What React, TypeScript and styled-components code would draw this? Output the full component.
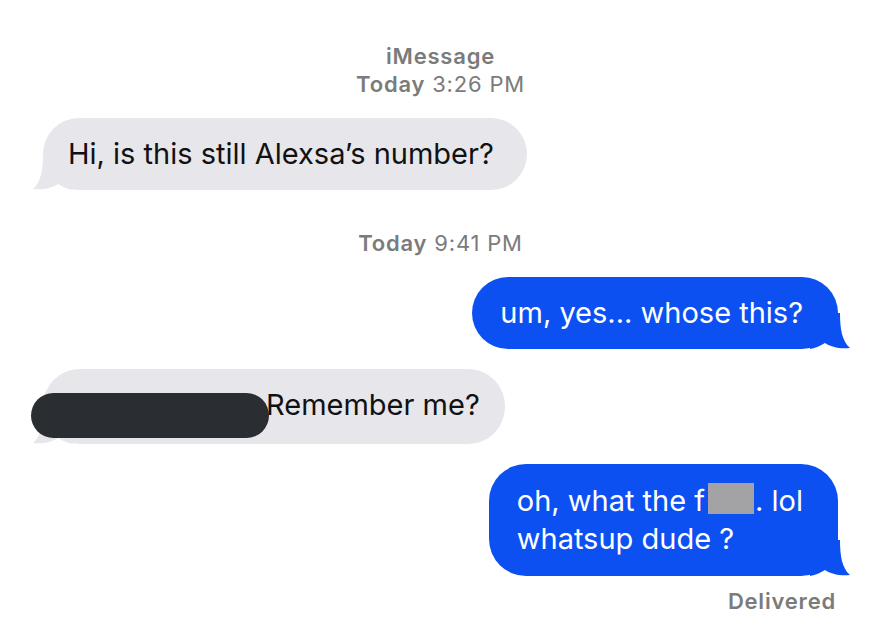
import React from "react";
import styled, { createGlobalStyle } from "styled-components";

const GlobalStyle = createGlobalStyle`
  html, body {
    margin: 0;
    padding: 0;
    background: #ffffff;
  }
  body {
    font-family: Inter, "Liberation Sans", Arial, sans-serif;
    -webkit-font-smoothing: antialiased;
  }
`;

const Thread = styled.div`
  width: 869px;
  height: 628px;
  box-sizing: border-box;
  padding: 42px 31px 0 43px;
  display: flex;
  flex-direction: column;
  overflow: hidden;
`;

const Stamp = styled.div<{ $top: number }>`
  margin-top: ${(p) => p.$top}px;
  text-align: center;
  color: #7b7b7b;
  font-size: 22px;
  letter-spacing: 0.8px;
  line-height: 28px;
  b {
    font-weight: 600;
  }
`;

const Row = styled.div<{ $mine?: boolean; $top: number }>`
  display: flex;
  justify-content: ${(p) => (p.$mine ? "flex-end" : "flex-start")};
  margin-top: ${(p) => p.$top}px;
`;

const Bubble = styled.div<{ $mine?: boolean; $padRight?: number }>`
  position: relative;
  isolation: isolate;
  box-sizing: border-box;
  min-height: 72px;
  padding: 21px ${(p) => p.$padRight ?? (p.$mine ? 35 : 33)}px 21px
    ${(p) => (p.$mine ? 28 : 25)}px;
  border-radius: 37px;
  font-size: 29px;
  line-height: 30px;
  color: ${(p) => (p.$mine ? "#ffffff" : "#111111")};
  background: ${(p) => (p.$mine ? "#0d50f2" : "#e6e6eb")};
`;

const Tail = styled.svg<{ $mine?: boolean }>`
  position: absolute;
  z-index: -1;
  bottom: 0;
  width: 40px;
  height: 36px;
  ${(p) =>
    p.$mine
      ? "right: -12px; transform: scaleX(-1);"
      : "left: -10px;"}
`;

const Lines = styled.div`
  line-height: 38px;
  margin: -3px 0;
`;

const NameRedaction = styled.span`
  display: inline-block;
  width: 238px;
  height: 45px;
  margin: -4px -3px -15px -37px;
  border-radius: 23px;
  background: #2a2e33;
  vertical-align: -8px;
`;

const WordRedaction = styled.span`
  display: inline-block;
  width: 46px;
  height: 31px;
  margin: 0 1px 0 3px;
  background: #a3a3a5;
  vertical-align: -3px;
`;

const Status = styled.div`
  align-self: flex-end;
  margin-top: 11px;
  margin-right: 2px;
  color: #7b7b7b;
  font-size: 22px;
  letter-spacing: 0.8px;
  line-height: 28px;
  font-weight: 600;
`;

function BubbleTail({ mine }: { mine?: boolean }) {
  return (
    <Tail $mine={mine} viewBox="0 0 40 36">
      <path
        d="M10 0 C10 16 8 28 0 35 C11 36 19 34 25 30 C30 33 34 35 40 36 L40 0 Z"
        fill={mine ? "#0d50f2" : "#e6e6eb"}
      />
    </Tail>
  );
}

export default function App() {
  return (
    <>
      <GlobalStyle />
      <Thread>
        <Stamp $top={0}>
          <b>iMessage</b>
          <br />
          <b>Today</b> 3:26 PM
        </Stamp>

        <Row $top={20}>
          <Bubble>
            Hi, is this still Alexsa’s number?
            <BubbleTail />
          </Bubble>
        </Row>

        <Stamp $top={39}>
          <b>Today</b> 9:41 PM
        </Stamp>

        <Row $mine $top={20}>
          <Bubble $mine>
            um, yes... whose this?
            <BubbleTail mine />
          </Bubble>
        </Row>

        <Row $top={20}>
          <Bubble $padRight={25}>
            <NameRedaction />
            Remember me?
            <BubbleTail />
          </Bubble>
        </Row>

        <Row $mine $top={20}>
          <Bubble $mine>
            <Lines>
              oh, what the f<WordRedaction />. lol
              <br />
              whatsup dude ?
            </Lines>
            <BubbleTail mine />
          </Bubble>
        </Row>

        <Status>Delivered</Status>
      </Thread>
    </>
  );
}
